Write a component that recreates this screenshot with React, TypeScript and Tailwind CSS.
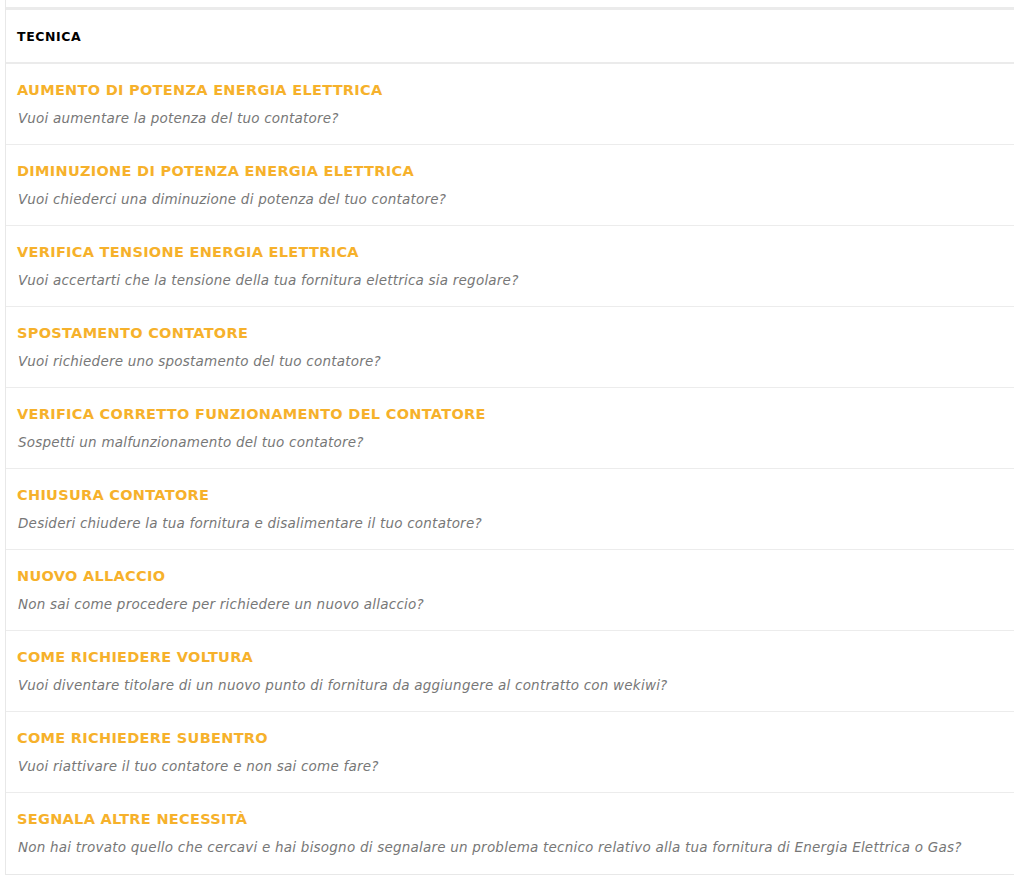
const items = [
  { title: 'Aumento di potenza energia elettrica', text: 'Vuoi aumentare la potenza del tuo contatore?' },
  { title: 'Diminuzione di potenza energia elettrica', text: 'Vuoi chiederci una diminuzione di potenza del tuo contatore?' },
  { title: 'Verifica tensione energia elettrica', text: 'Vuoi accertarti che la tensione della tua fornitura elettrica sia regolare?' },
  { title: 'Spostamento contatore', text: 'Vuoi richiedere uno spostamento del tuo contatore?' },
  { title: 'Verifica corretto funzionamento del contatore', text: 'Sospetti un malfunzionamento del tuo contatore?' },
  { title: 'Chiusura contatore', text: 'Desideri chiudere la tua fornitura e disalimentare il tuo contatore?' },
  { title: 'Nuovo allaccio', text: 'Non sai come procedere per richiedere un nuovo allaccio?' },
  { title: 'Come richiedere voltura', text: 'Vuoi diventare titolare di un nuovo punto di fornitura da aggiungere al contratto con wekiwi?' },
  { title: 'Come richiedere subentro', text: 'Vuoi riattivare il tuo contatore e non sai come fare?' },
  { title: 'Segnala altre necessità', text: 'Non hai trovato quello che cercavi e hai bisogno di segnalare un problema tecnico relativo alla tua fornitura di Energia Elettrica o Gas?' },
];

export default function App() {
  return (
    <div className="min-h-[890px] bg-white pl-[5px]" style={{ fontFamily: '"DejaVu Sans", "Open Sans", sans-serif' }}>
      <div className="border-l border-b border-[#e8e8e8] pt-[7px]">
        <div className="border-t-[3px] border-b-2 border-[#ebebeb] h-[57px] flex items-center pl-[11px] pt-[3px]">
          <h2 className="text-[12.5px] tracking-[0.6px] font-bold text-black uppercase">Tecnica</h2>
        </div>
        {items.map((it, i) => (
          <a
            key={i}
            href="#"
            className={`block h-[81px] pl-[11px] pt-[17px] ${i < items.length - 1 ? 'border-b border-[#ececec]' : ''}`}
          >
            <div className="text-[14.5px] tracking-[0.3px] leading-[18px] font-bold uppercase text-[#f6b12b]">{it.title}</div>
            <div className="mt-[10px] pl-px text-[13.5px] tracking-[0.22px] leading-[18px] italic text-[#777]">{it.text}</div>
          </a>
        ))}
      </div>
    </div>
  );
}
